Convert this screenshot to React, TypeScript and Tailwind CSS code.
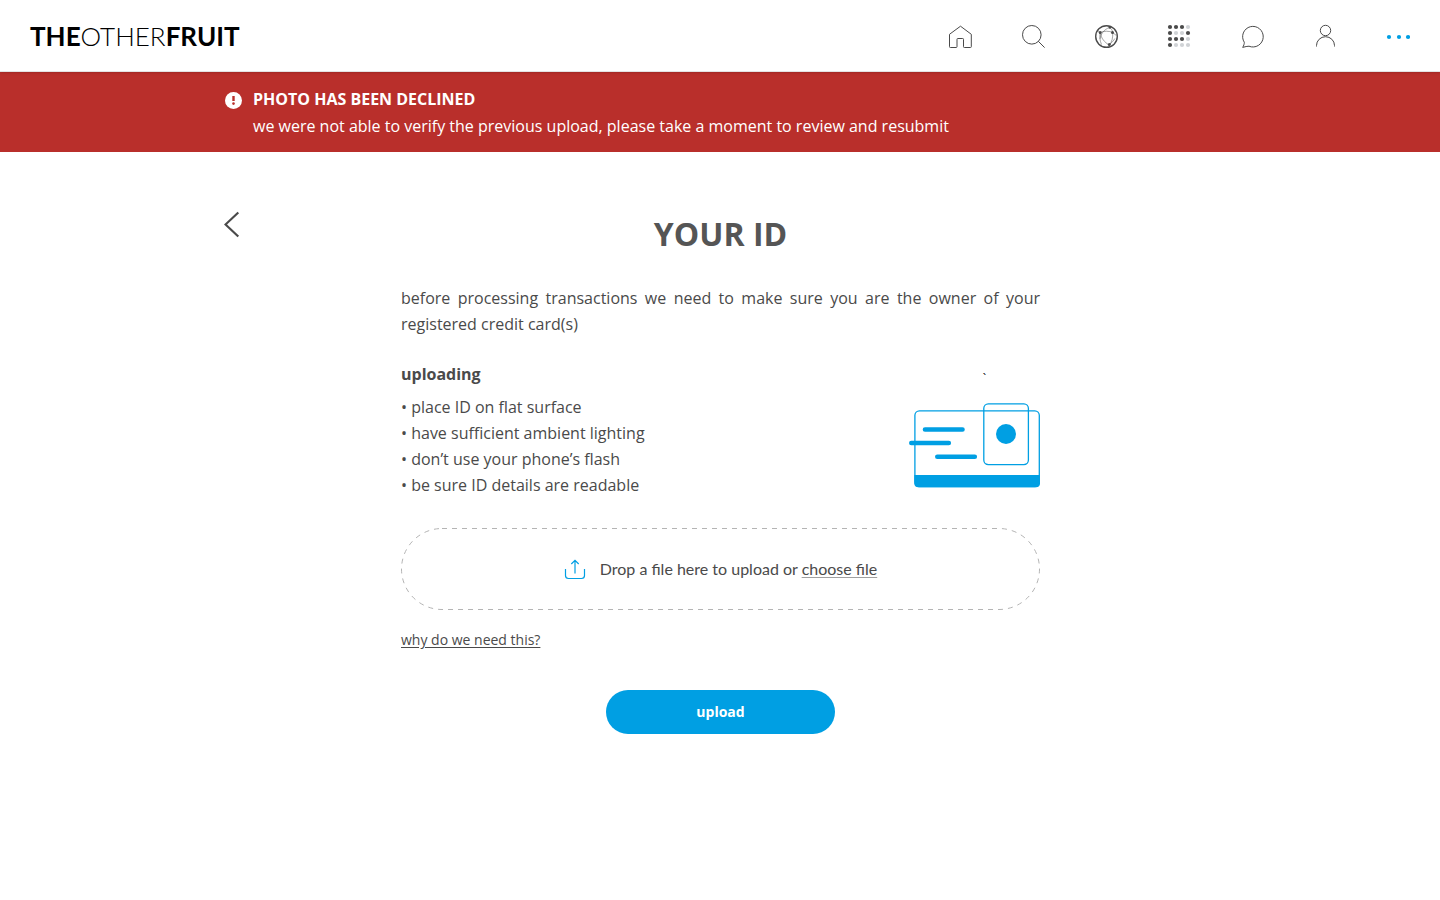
import React from "react";

const iconProps = {
  width: 24,
  height: 24,
  viewBox: "0 0 24 24",
  fill: "none",
  stroke: "currentColor",
  strokeWidth: 1,
  "aria-hidden": true,
} as const;

function HomeIcon() {
  return (
    <svg {...iconProps} strokeLinejoin="round">
      <path d="M12.5 2.2 23.3 10.3v12.4a.8.8 0 0 1-.8.8h-6.2a.8.8 0 0 1-.8-.8v-7.4a.8.8 0 0 0-.8-.8H9.800a.8.8 0 0 0-.8.8v7.400a.8.8 0 0 1-.8.8H2.300a.8.8 0 0 1-.8-.8V10.300Z" />
    </svg>
  );
}

function SearchIcon() {
  return (
    <svg {...iconProps}>
      <circle cx="10.800" cy="10.800" r="9.300" />
      <path d="m17.200 17.200 6.400 6.400" />
    </svg>
  );
}

function NetworkIcon() {
  return (
    <svg {...iconProps}>
      <circle cx="12.500" cy="12.500" r="10.800" strokeWidth="1.400" />
      <g strokeWidth="0.500">
        <path d="M6.200 8.500C10 6.800 15 6.800 18.700 8.500 19 13.500 18 18 15.300 21 10.500 18.500 7 14 6.200 8.500Z" />
        <path d="M15.500 3.500C10 5.500 7 9.500 6 15M15.500 3.500c2 1.400 3 3 3.200 5l3.600 3M6.200 8.500 3.500 6.500M6.200 8.500c-.8 4-.4 8 1.300 12M15.300 20.500c2.200-1.500 4.500-4 5.500-6" />
      </g>
      <g fill="currentColor" stroke="none">
        <circle cx="6.200" cy="8.500" r="1.500" />
        <circle cx="18.500" cy="8.500" r="1.500" />
        <circle cx="15.300" cy="20.500" r="1.500" />
        <circle cx="15.800" cy="3.500" r="1.200" />
      </g>
    </svg>
  );
}

const dotRows = ["1110", "1001", "1110", "1000"];

function AppsIcon() {
  return (
    <svg {...iconProps} stroke="none">
      {dotRows.flatMap((row, y) =>
        row.split("").map((dot, x) => (
          <circle
            key={`${x}-${y}`}
            cx={3 + x * 6}
            cy={3 + y * 6}
            r="2.100"
            fill={dot === "1" ? "#4a4a4a" : "#d0d3d6"}
          />
        )),
      )}
    </svg>
  );
}

function ChatIcon() {
  return (
    <svg {...iconProps} strokeLinejoin="round">
      <path d="M4.300 18.300A10.300 10.300 0 1 1 9 22.200C7.200 22.300 5.200 22.600 2.700 23.400 3.700 21.500 4.400 20 4.300 18.300Z" />
    </svg>
  );
}

function PersonIcon() {
  return (
    <svg {...iconProps}>
      <circle cx="12.500" cy="6.500" r="5.200" />
      <path d="M3.500 22.500v-1a9 8.800 0 0 1 18 0v1" />
    </svg>
  );
}

function MoreIcon() {
  return (
    <svg {...iconProps} fill="#009fe3" stroke="none">
      <circle cx="3" cy="13" r="2.100" />
      <circle cx="13" cy="13" r="2.100" />
      <circle cx="22" cy="13" r="2.100" />
    </svg>
  );
}

const navItems = [
  { label: "Home", Icon: HomeIcon },
  { label: "Search", Icon: SearchIcon },
  { label: "Network", Icon: NetworkIcon },
  { label: "Apps", Icon: AppsIcon },
  { label: "Messages", Icon: ChatIcon },
  { label: "Profile", Icon: PersonIcon },
  { label: "More", Icon: MoreIcon },
];

function IdCardDrawing() {
  return (
    <svg width="131" height="86" viewBox="0 0 131 86" fill="none" aria-hidden="true">
      <g stroke="#009fe3" strokeWidth="1.300">
        <rect x="5.900" y="7.800" width="124.400" height="75.800" rx="4.500" />
        <rect x="74.800" y="0.800" width="44.600" height="60.800" rx="4.500" />
      </g>
      <path d="M5.300 72H131v8.300a4 4 0 0 1-4 4H9.300a4 4 0 0 1-4-4Z" fill="#009fe3" />
      <circle cx="97" cy="31" r="10" fill="#009fe3" />
      <path
        d="M16 26.500h37.500M2.300 40h37.500M28.300 53.700h37.500"
        stroke="#009fe3"
        strokeWidth="4.600"
        strokeLinecap="round"
      />
    </svg>
  );
}

const tips = [
  "place ID on flat surface",
  "have sufficient ambient lighting",
  "don’t use your phone’s flash",
  "be sure ID details are readable",
];

export default function App() {
  return (
    <div className="min-h-screen bg-white font-['Open_Sans',sans-serif] text-base leading-[26px] text-[#4a4a4a]">
      <header className="relative flex h-18 items-center justify-between border-b border-[#e3e3e3] px-[30px] shadow-sm">
        <a href="#home" className="font-['Lato',sans-serif] text-[26px] text-black">
          <span className="font-bold">THE</span>
          <span className="font-light">OTHER</span>
          <span className="font-bold">FRUIT</span>
        </a>
        <nav className="flex gap-[49px]">
          {navItems.map(({ label, Icon }) => (
            <a key={label} href={`#${label.toLowerCase()}`} aria-label={label}>
              <Icon />
            </a>
          ))}
        </nav>
      </header>

      <section role="alert" className="bg-[#b92f2b] text-white">
        <div className="mx-auto flex h-20 max-w-[992px] items-start gap-2.5 pt-3.5">
          <svg width="19" height="19" viewBox="0 0 19 19" className="mt-1 shrink-0" aria-hidden="true">
            <circle cx="9.500" cy="10.500" r="8.500" fill="#fff" />
            <path d="M9.500 6v5" stroke="#b92f2b" strokeWidth="2.400" />
            <circle cx="9.500" cy="13.600" r="1.300" fill="#b92f2b" />
          </svg>
          <div className="leading-[27px]">
            <h2 className="font-bold">PHOTO HAS BEEN DECLINED</h2>
            <p>we were not able to verify the previous upload, please take a moment to review and resubmit</p>
          </div>
        </div>
      </section>

      <div className="mx-auto flex max-w-[992px] items-start pt-[58px]">
        <button type="button" aria-label="Back" className="w-[177px] shrink-0">
          <svg width="16" height="28" viewBox="0 0 16 28" fill="none" aria-hidden="true">
            <path d="M14.300 2.500 1.500 14.500l12.800 12" stroke="#4a4a4a" strokeWidth="2.200" />
          </svg>
        </button>

        <main className="flex max-w-[639px] flex-1 flex-col">
          <h1 className="text-center text-[32px] leading-12 font-bold text-[#555]">YOUR ID</h1>
          <p className="mt-[27px] text-justify">
            before processing transactions we need to make sure you are the owner of your registered credit
            card(s)
          </p>

          <div className="mt-6 flex justify-between">
            <section>
              <h2 className="font-bold">uploading</h2>
              <ul className="mt-[7px]">
                {tips.map((tip) => (
                  <li key={tip}>• {tip}</li>
                ))}
              </ul>
            </section>
            <div className="flex flex-col gap-4 pt-2.5">
              <span className="self-center pl-5 text-xs text-black">`</span>
              <IdCardDrawing />
            </div>
          </div>

          <label className="relative mt-[30px] flex h-[82px] cursor-pointer items-center justify-center gap-3.5 rounded-full font-['Lato',sans-serif]">
            <svg className="absolute inset-0 size-full" aria-hidden="true">
              <rect
                x="0.500"
                y="0.500"
                rx="40.500"
                fill="none"
                stroke="#b4b4b4"
                strokeDasharray="5 5"
                className="h-[calc(100%-1px)] w-[calc(100%-1px)]"
              />
            </svg>
            <input type="file" className="sr-only" />
            <svg width="22" height="22" viewBox="0 0 22 22" fill="none" stroke="#009fe3" strokeWidth="1.200" aria-hidden="true">
              <path d="M1.500 11v6.500a3 3 0 0 0 3 3h13a3 3 0 0 0 3-3V11M11 15.500V2.500M7.300 6 11 2.300 14.700 6" />
            </svg>
            <span>
              Drop a file here to upload or{" "}
              <span className="underline decoration-[#a0a0a0] underline-offset-2">choose file</span>
            </span>
          </label>

          <a href="#why" className="mt-5 self-start text-sm underline underline-offset-2">
            why do we need this?
          </a>

          <button
            type="button"
            className="mt-10 h-11 w-[229px] self-center rounded-full bg-[#009fe3] text-sm font-bold text-white"
          >
            upload
          </button>
        </main>
      </div>
    </div>
  );
}
